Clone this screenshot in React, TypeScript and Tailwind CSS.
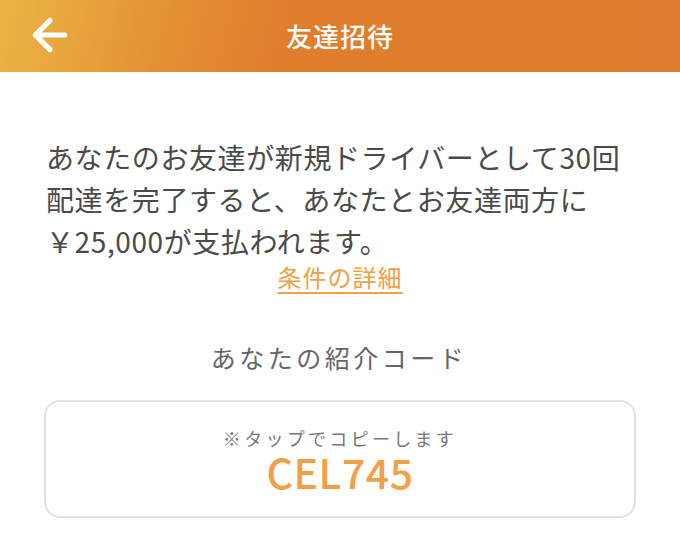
import { ArrowLeft } from "lucide-react";

const jp = "font-['Noto_Sans_CJK_JP','Noto_Sans',sans-serif]";

export default function App() {
  return (
    <div className={`w-[680px] h-[539px] bg-white overflow-hidden ${jp}`}>
      <header className="relative h-[72px] flex items-center justify-center bg-[linear-gradient(105deg,#ecb545_0%,#e38f34_26%,#e07e2d_42%,#df7b2c_100%)]">
        <button className="absolute left-[25px] top-[10px] text-white">
          <ArrowLeft size={50} strokeWidth={2.5} />
        </button>
        <h1 className="text-white text-[26px] font-medium tracking-[1px] leading-none">
          友達招待
        </h1>
      </header>

      <section className="px-[46px] pt-[64px]">
        <p className="text-[#4a4a4a] text-[28px] leading-[42px] tracking-[0.6px]">
          あなたのお友達が新規ドライバーとして30回
          <br />
          配達を完了すると、あなたとお友達両方に
          <br />
          ￥25,000が支払われます。
        </p>
        <div className="flex justify-center">
          <a className="text-[#f0a046] text-[24px] leading-[34px] tracking-[1px] underline underline-offset-[5px] decoration-[1.5px] mt-[-2px]">
            条件の詳細
          </a>
        </div>
      </section>

      <div className="flex justify-center mt-[46px] mr-[2px]">
        <h2 className="text-[#666] text-[25px] leading-[34px] tracking-[3.5px]">
          あなたの紹介コード
        </h2>
      </div>

      <div className="mx-[44px] mt-[26px] h-[118px] rounded-[16px] border-[2px] border-[#e2e2e2] flex flex-col items-center justify-center">
        <span className="text-[#777] text-[18px] leading-[24px] tracking-[3.3px]">
          ※タップでコピーします
        </span>
        <span className="text-[#f0a046] text-[41px] leading-[42px] font-medium tracking-[0.5px]">
          CEL745
        </span>
      </div>
    </div>
  );
}
